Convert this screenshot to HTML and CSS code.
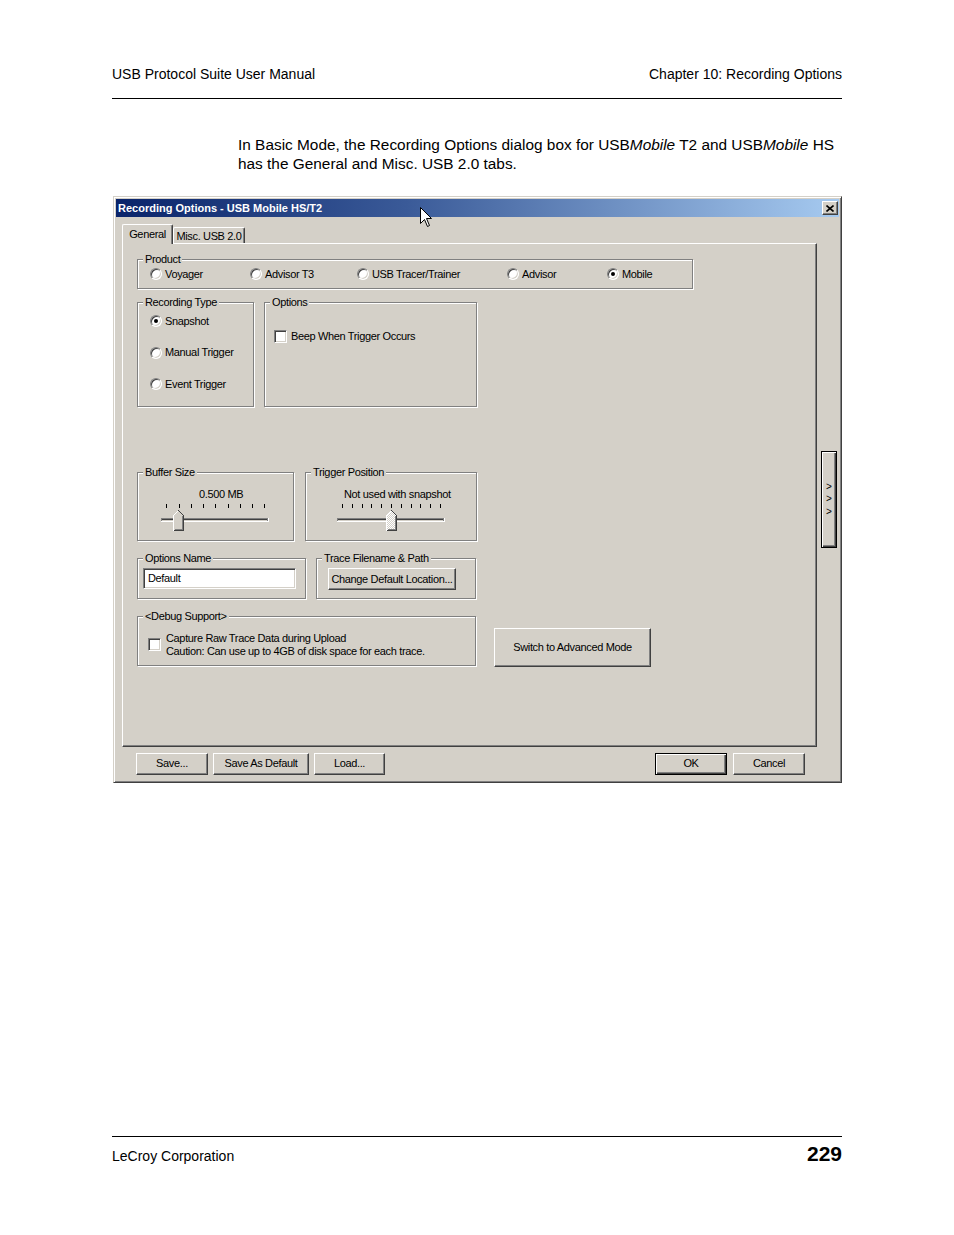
FILE: index.html
```html
<!DOCTYPE html>
<html lang="en">
<head>
<meta charset="utf-8">
<title>Recording Options</title>
<link rel="stylesheet" href="styles.css">
</head>
<body>
<div class="page">
  <header class="running-head">
    <span>USB Protocol Suite User Manual</span>
    <span>Chapter 10: Recording Options</span>
  </header>

  <p class="intro">In Basic Mode, the Recording Options dialog box for USB<i>Mobile</i> T2 and USB<i>Mobile</i> HS has the General and Misc. USB 2.0 tabs.</p>

  <div class="dialog">
    <div class="titlebar">
      <span class="title">Recording Options - USB Mobile HS/T2</span>
      <span class="close">
        <svg width="8" height="7" viewBox="0 0 8 7"><path d="M0.5 0.5 L7.5 6.5 M7.5 0.5 L0.5 6.5" stroke="#000" stroke-width="1.6" fill="none"/></svg>
      </span>
    </div>

    <div class="dlg-body">
      <div class="tabs">
        <div class="tab active">General</div>
        <div class="tab misc">Misc. USB 2.0</div>
      </div>

      <div class="tab-row">
        <div class="panel">
          <div class="group g-product">
            <div class="legend">Product</div>
            <div class="radio-row">
              <div class="opt w-voy"><span class="radio"></span>Voyager</div>
              <div class="opt w-t3"><span class="radio"></span>Advisor T3</div>
              <div class="opt w-trc"><span class="radio"></span>USB Tracer/Trainer</div>
              <div class="opt w-adv"><span class="radio"></span>Advisor</div>
              <div class="opt"><span class="radio on"></span>Mobile</div>
            </div>
          </div>

          <div class="row row2">
            <div class="group g-rectype">
              <div class="legend">Recording Type</div>
              <div class="stack">
                <div class="opt"><span class="radio on"></span>Snapshot</div>
                <div class="opt"><span class="radio"></span>Manual Trigger</div>
                <div class="opt"><span class="radio"></span>Event Trigger</div>
              </div>
            </div>
            <div class="group g-options">
              <div class="legend">Options</div>
              <div class="chk-row"><span class="check"></span>Beep When Trigger Occurs</div>
            </div>
          </div>

          <div class="row row3">
            <div class="group g-buffer">
              <div class="legend">Buffer Size</div>
              <div class="val v-buffer">0.500 MB</div>
              <svg class="slider s-buffer" width="112" height="29" viewBox="0 0 112 29" shape-rendering="crispEdges">
                <g fill="#000">
                  <rect x="8" y="1" width="1" height="4"/>
                  <rect x="21" y="1" width="1" height="4"/>
                  <rect x="33" y="1" width="1" height="4"/>
                  <rect x="45" y="1" width="1" height="4"/>
                  <rect x="57" y="1" width="1" height="4"/>
                  <rect x="70" y="1" width="1" height="4"/>
                  <rect x="82" y="1" width="1" height="4"/>
                  <rect x="94" y="1" width="1" height="4"/>
                  <rect x="106" y="1" width="1" height="4"/>
                </g>
                <rect x="3" y="15" width="108" height="4" fill="#fff"/>
                <rect x="3" y="15" width="107" height="3" fill="#808080"/>
                <rect x="4" y="16" width="105" height="1" fill="#404040"/>
                <rect x="4" y="17" width="105" height="1" fill="#d4d0c8"/>
                <g transform="translate(15,7)">
                  <polygon points="0,5.5 5.5,0 11,5.5 11,21 0,21" fill="#d4d0c8"/>
                  <polyline points="0.5,20.5 0.5,5.5 5.5,0.5" fill="none" stroke="#fff"/>
                  <polyline points="5.5,0.5 10.5,5.5 10.5,20.5 0.5,20.5" fill="none" stroke="#404040"/>
                  <polyline points="9.5,6 9.5,19.5 1.5,19.5" fill="none" stroke="#808080"/>
                </g>
              </svg>
            </div>
            <div class="group g-trigger">
              <div class="legend">Trigger Position</div>
              <div class="val v-trigger">Not used with snapshot</div>
              <svg class="slider s-trigger" width="112" height="29" viewBox="0 0 112 29" shape-rendering="crispEdges">
                <defs>
                  <pattern id="dither" width="2" height="2" patternUnits="userSpaceOnUse">
                    <rect width="2" height="2" fill="#d4d0c8"/>
                    <rect width="1" height="1" fill="#fff"/>
                    <rect x="1" y="1" width="1" height="1" fill="#fff"/>
                  </pattern>
                </defs>
                <g fill="#000">
                  <rect x="8" y="1" width="1" height="4"/>
                  <rect x="18" y="1" width="1" height="4"/>
                  <rect x="28" y="1" width="1" height="4"/>
                  <rect x="37" y="1" width="1" height="4"/>
                  <rect x="47" y="1" width="1" height="4"/>
                  <rect x="57" y="1" width="1" height="4"/>
                  <rect x="67" y="1" width="1" height="4"/>
                  <rect x="77" y="1" width="1" height="4"/>
                  <rect x="86" y="1" width="1" height="4"/>
                  <rect x="96" y="1" width="1" height="4"/>
                  <rect x="106" y="1" width="1" height="4"/>
                </g>
                <rect x="3" y="15" width="108" height="4" fill="#fff"/>
                <rect x="3" y="15" width="107" height="3" fill="#808080"/>
                <rect x="4" y="16" width="105" height="1" fill="#404040"/>
                <rect x="4" y="17" width="105" height="1" fill="#d4d0c8"/>
                <g transform="translate(52,7)">
                  <polygon points="0,5.5 5.5,0 11,5.5 11,21 0,21" fill="url(#dither)"/>
                  <polyline points="0.5,20.5 0.5,5.5 5.5,0.5" fill="none" stroke="#fff"/>
                  <polyline points="5.5,0.5 10.5,5.5 10.5,20.5 0.5,20.5" fill="none" stroke="#404040"/>
                  <polyline points="9.5,6 9.5,19.5 1.5,19.5" fill="none" stroke="#808080"/>
                </g>
              </svg>
            </div>
          </div>

          <div class="row row4">
            <div class="group g-name">
              <div class="legend">Options Name</div>
              <div class="field">Default</div>
            </div>
            <div class="group g-trace">
              <div class="legend">Trace Filename &amp; Path</div>
              <div class="btn b-location">Change Default Location...</div>
            </div>
          </div>

          <div class="row row5">
            <div class="group g-debug">
              <div class="legend">&lt;Debug Support&gt;</div>
              <div class="chk-line">
                <span class="check"></span>
                <div class="lines">
                  <div>Capture Raw Trace Data during Upload</div>
                  <div>Caution: Can use up to 4GB of disk space for each trace.</div>
                </div>
              </div>
            </div>
            <div class="btn b-switch">Switch to Advanced Mode</div>
          </div>
        </div>

        <div class="btn default expand">
          <span>&gt;</span><span>&gt;</span><span>&gt;</span>
        </div>
      </div>

      <div class="buttons">
        <div class="btn b-save">Save...</div>
        <div class="btn b-default">Save As Default</div>
        <div class="btn b-load">Load...</div>
        <div class="btn default b-ok">OK</div>
        <div class="btn b-cancel">Cancel</div>
      </div>
    </div>

    <svg class="cursor" width="13" height="21" viewBox="0 0 13 21">
      <path d="M0.5 0.5 L0.5 16.5 L4.5 12.5 L7.5 19.5 L9.5 18.5 L6.5 11.5 L11.5 11.5 Z" fill="#fff" stroke="#000" stroke-width="1" stroke-linejoin="miter"/>
    </svg>
  </div>

  <footer class="running-foot">
    <span class="company">LeCroy Corporation</span>
    <span class="pageno">229</span>
  </footer>
</div>
</body>
</html>
```

FILE: styles.css
```css
* { box-sizing: border-box; }

html, body {
  margin: 0;
  padding: 0;
  background: #fff;
}

body {
  font-family: "Liberation Sans", Arial, Helvetica, sans-serif;
  color: #000;
}

.page {
  width: 730px;
  margin-left: 112px;
}

/* ---------- running header / footer ---------- */
.running-head {
  display: flex;
  justify-content: space-between;
  font-size: 14px;
  line-height: 16px;
  padding: 66px 0 16px;
  border-bottom: 1px solid #000;
}

.intro {
  margin: 36px 0 0 126px;
  font-size: 15.4px;
  line-height: 19px;
}

.running-foot {
  margin-top: 353px;
  border-top: 1px solid #000;
  padding-top: 9px;
  display: flex;
  justify-content: space-between;
  align-items: baseline;
  line-height: 16px;
}

.company { font-size: 14px; }

.pageno {
  font-size: 21px;
  font-weight: bold;
}

/* ---------- dialog ---------- */
.dialog {
  position: relative;
  margin: 23px 0 0 1px;
  width: 729px;
  height: 587px;
  background: #d4d0c8;
  border: 1px solid;
  border-color: #d4d0c8 #404040 #404040 #d4d0c8;
  box-shadow: inset 1px 1px 0 #fff, inset -1px -1px 0 #808080;
  padding: 2px;
  font-size: 11px;
  line-height: 13px;
  letter-spacing: -0.35px;
}

.titlebar {
  height: 18px;
  display: flex;
  align-items: center;
  padding: 0 1px 0 1px;
  background: linear-gradient(90deg, #0a246a 0%, #3a5a98 40%, #a6caf0 100%);
}

.title {
  color: #fff;
  font-weight: bold;
  letter-spacing: 0;
  padding-left: 1px;
}

.close {
  margin-left: auto;
  width: 16px;
  height: 14px;
  background: #d4d0c8;
  border: 1px solid;
  border-color: #fff #404040 #404040 #fff;
  box-shadow: inset -1px -1px 0 #808080;
  display: flex;
  align-items: center;
  justify-content: center;
}

.close svg { display: block; margin-left: -1px; }

.dlg-body {
  padding: 7px 0 0 6px;
  display: flex;
  flex-direction: column;
}

/* tabs */
.tabs {
  display: flex;
  align-items: flex-end;
  height: 19px;
}

.tab {
  height: 16px;
  background: #d4d0c8;
  border-top: 1px solid #fff;
  border-left: 1px solid #fff;
  border-right: 1px solid #404040;
  box-shadow: inset -1px 0 0 #808080;
  border-radius: 2px 2px 0 0;
  padding-top: 2px;
  text-align: center;
}

.tab.active {
  position: relative;
  z-index: 1;
  width: 51px;
  height: 20px;
  margin-bottom: -1px;
  padding-top: 3px;
}

.tab.misc { width: 72px; }

.tab-row {
  display: flex;
  align-items: flex-start;
}

.panel {
  width: 695px;
  height: 504px;
  border: 1px solid;
  border-color: #fff #404040 #404040 #fff;
  box-shadow: inset -1px -1px 0 #808080;
  padding: 15px 0 0 14px;
}

/* group boxes */
.group {
  border: 1px solid #808080;
  box-shadow: 1px 1px 0 #fff, inset 1px 1px 0 #fff;
  flex: none;
}

.legend {
  width: fit-content;
  margin: -7px 0 0 5px;
  padding: 0 2px;
  line-height: 12px;
  background: #d4d0c8;
  white-space: nowrap;
}

.row {
  display: flex;
  align-items: flex-start;
}

.g-product { width: 556px; height: 30px; }

.radio-row {
  display: flex;
  margin-top: 2px;
  padding-left: 12px;
}

.opt {
  display: flex;
  align-items: center;
  height: 14px;
  white-space: nowrap;
}

.w-voy { width: 100px; }
.w-t3  { width: 107px; }
.w-trc { width: 150px; }
.w-adv { width: 100px; }

.radio {
  flex: none;
  width: 12px;
  height: 12px;
  margin-right: 3px;
  border-radius: 50%;
  background: #fff;
  border: 1px solid;
  border-color: #808080 #fff #fff #808080;
  box-shadow: inset 1px 1px 0 #404040, inset -1px -1px 0 #d4d0c8;
  display: flex;
  align-items: center;
  justify-content: center;
}

.radio.on::after {
  content: "";
  width: 4px;
  height: 4px;
  border-radius: 50%;
  background: #000;
}

.check {
  flex: none;
  width: 13px;
  height: 13px;
  background: #fff;
  border: 1px solid;
  border-color: #808080 #fff #fff #808080;
  box-shadow: inset 1px 1px 0 #404040, inset -1px -1px 0 #d4d0c8;
}

.row2 { margin-top: 13px; }
.g-rectype { width: 117px; height: 105px; }
.g-options { width: 213px; height: 105px; margin-left: 10px; }

.stack {
  display: flex;
  flex-direction: column;
  gap: 17.5px;
  margin-top: 6px;
  padding-left: 12px;
}

.chk-row {
  display: flex;
  align-items: center;
  gap: 4px;
  height: 14px;
  margin-top: 21px;
  padding-left: 9px;
}

.row3 { margin-top: 65px; }
.g-buffer { width: 157px; height: 69px; }
.g-trigger { width: 172px; height: 69px; margin-left: 11px; }

.val {
  margin-top: 10px;
  line-height: 13px;
  white-space: nowrap;
}

.v-buffer { padding-left: 61px; }
.v-trigger { padding-left: 38px; }

.slider {
  display: block;
  margin-top: 2px;
}

.s-buffer { margin-left: 20px; }
.s-trigger { margin-left: 28px; }

.row4 { margin-top: 17px; }
.g-name { width: 169px; height: 41px; }
.g-trace { width: 160px; height: 41px; margin-left: 10px; }

.field {
  width: 153px;
  height: 21px;
  margin: 4px 0 0 5px;
  background: #fff;
  border: 1px solid;
  border-color: #808080 #fff #fff #808080;
  box-shadow: inset 1px 1px 0 #404040, inset -1px -1px 0 #d4d0c8;
  padding-left: 4px;
  line-height: 19px;
}

.row5 { margin-top: 17px; }
.g-debug { width: 339px; height: 50px; }

.chk-line {
  display: flex;
  align-items: center;
  gap: 5px;
  margin-top: 10px;
  padding-left: 10px;
}

.lines { line-height: 12.5px; white-space: nowrap; }

/* buttons */
.btn {
  flex: none;
  display: flex;
  align-items: center;
  justify-content: center;
  background: #d4d0c8;
  border: 1px solid;
  border-color: #fff #404040 #404040 #fff;
  box-shadow: inset -1px -1px 0 #808080;
  white-space: nowrap;
}

.btn.default {
  border: 1px solid #000;
  box-shadow: inset 1px 1px 0 #fff, inset -1px -1px 0 #404040, inset -2px -2px 0 #808080;
}

.b-location {
  width: 128px;
  height: 22px;
  margin: 4px 0 0 11px;
}

.b-switch {
  width: 157px;
  height: 39px;
  margin: 12px 0 0 18px;
}

.expand {
  width: 16px;
  height: 97px;
  margin: 208px 0 0 4px;
  flex-direction: column;
  font-size: 10px;
  line-height: 12.5px;
  letter-spacing: 0;
}

.buttons {
  display: flex;
  margin-top: 6px;
  padding: 0 34px 0 14px;
}

.buttons .btn { height: 22px; padding-bottom: 1px; }

.b-save { width: 72px; }
.b-default { width: 96px; margin-left: 5px; }
.b-load { width: 71px; margin-left: 5px; }
.b-ok { width: 72px; margin-left: auto; }
.b-cancel { width: 72px; margin-left: 6px; }

/* mouse pointer lying over the title bar */
.cursor {
  position: absolute;
  left: 306px;
  top: 10px;
  display: block;
}
```
